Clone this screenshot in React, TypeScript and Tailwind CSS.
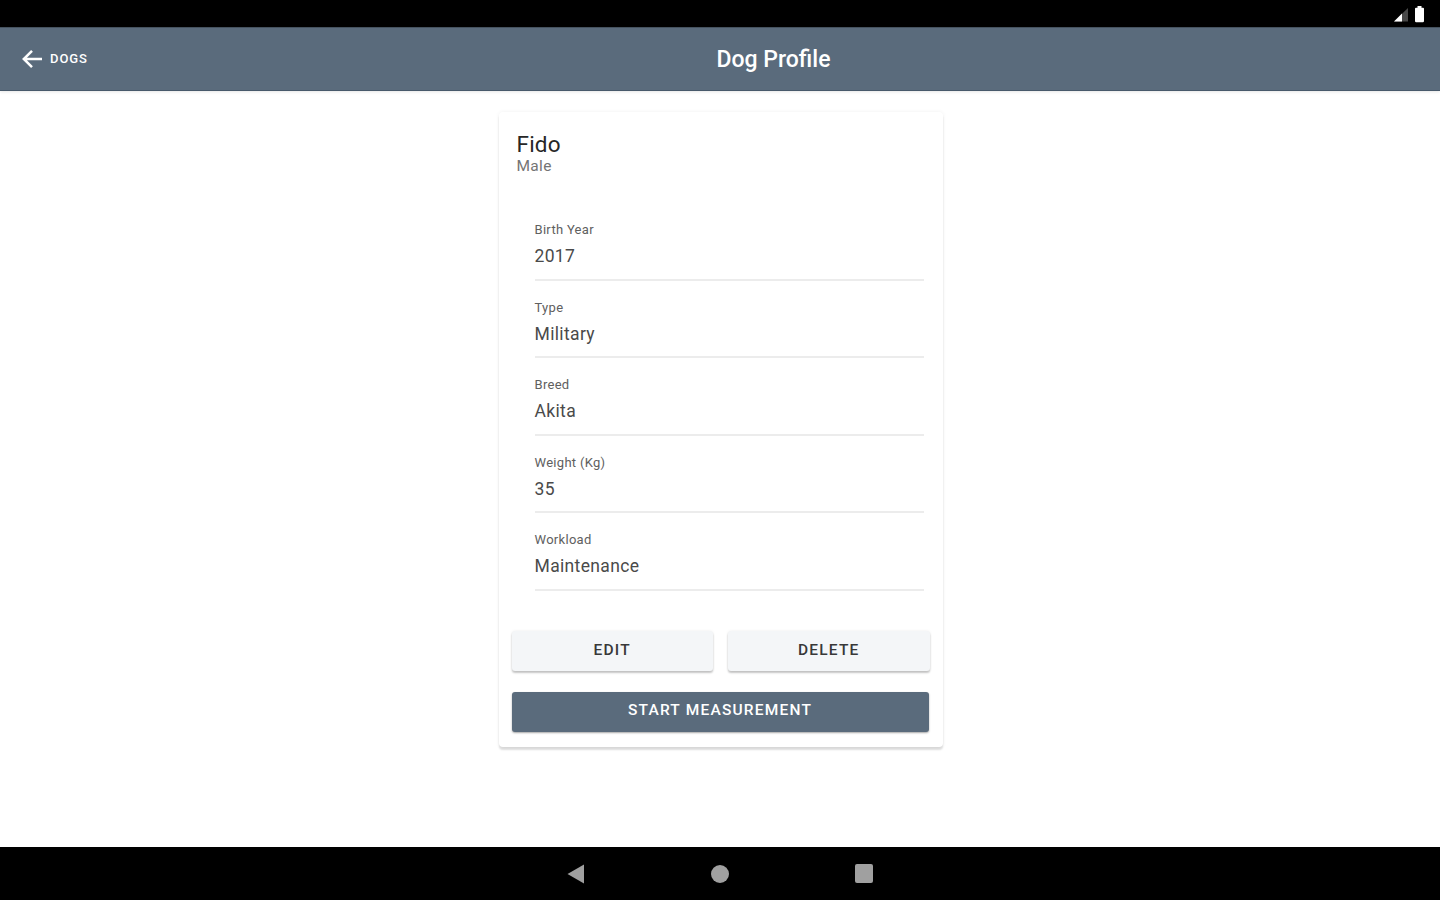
import React from 'react';

interface Field {
  label: string;
  value: string;
}

const fields: Field[] = [
  { label: 'Birth Year', value: '2017' },
  { label: 'Type', value: 'Military' },
  { label: 'Breed', value: 'Akita' },
  { label: 'Weight (Kg)', value: '35' },
  { label: 'Workload', value: 'Maintenance' },
];

const StatusBar: React.FC = () => (
  <div className="h-[27px] shrink-0 bg-black flex items-start justify-end gap-[7px] pt-[6px] pr-[16px]">
    <svg className="w-[14px] h-[17px]" viewBox="0 0 14 17">
      <path d="M0 15.5L14 2V15.5Z" fill="#484848" />
      <path d="M0 15.5L8 7.5V15.5Z" fill="#fff" />
    </svg>
    <svg className="w-[9px] h-[17px]" viewBox="0 0 9 17">
      <path d="M2.5 0h4v1.8H8q1 0 1 1V15q0 1.3-1.2 1.3H1.2Q0 16.3 0 15V2.8q0-1 1-1h1.5z" fill="#fff" />
    </svg>
  </div>
);

const Header: React.FC = () => (
  <header className="h-[64px] shrink-0 bg-[#5a6b7c] border-t border-b border-t-[#45525f] border-b-[#48596b] shadow-[0_1px_3px_rgba(0,0,0,0.1)] grid grid-cols-[107px_1fr] items-center text-white">
    <button className="flex items-center gap-[8px] pl-[22px] text-[13px] font-medium tracking-[0.9px]">
      <svg className="w-[20px] h-[20px]" viewBox="0 0 20 20" fill="none" stroke="currentColor" strokeWidth="2.5">
        <path d="M10 1.8L1.8 10L10 18.2M1.8 10H20" />
      </svg>
      DOGS
    </button>
    <h1 className="pt-[2px] text-center text-[23px] leading-[30px] font-medium">Dog Profile</h1>
  </header>
);

const ProfileCard: React.FC = () => (
  <div className="w-[444px] h-[635px] rounded-[4px] bg-white shadow-[0_3px_2px_rgba(0,0,0,0.13),0_0_4px_rgba(0,0,0,0.06)] flex flex-col">
    <div className="h-[91px] pt-[19px] pl-[18px]">
      <h2 className="text-[22.5px] leading-[26px] tracking-[0.2px] text-[#272727]">Fido</h2>
      <p className="text-[15.5px] leading-[19px] tracking-[0.3px] text-[#747474]">Male</p>
    </div>

    <dl className="pl-[36px] pr-[19px]">
      {fields.map((field) => (
        <div key={field.label} className="h-[77.5px] pt-[18px] border-b-2 border-[#ececec]">
          <dt className="text-[13px] leading-[18px] tracking-[0.3px] text-[#606060]">{field.label}</dt>
          <dd className="mt-[6px] text-[17.5px] leading-[22px] tracking-[0.35px] text-[#4a4a4a]">{field.value}</dd>
        </div>
      ))}
    </dl>

    <div className="mt-[40px] px-[13px] grid grid-cols-2 gap-[15px] text-[15.5px] font-medium tracking-[1.2px] text-[#383838]">
      <button className="h-[40px] rounded-[3px] bg-[#f4f6f8] shadow-[0_2px_2px_rgba(0,0,0,0.22),0_0_3px_rgba(0,0,0,0.08)]">EDIT</button>
      <button className="h-[40px] rounded-[3px] bg-[#f4f6f8] shadow-[0_2px_2px_rgba(0,0,0,0.22),0_0_3px_rgba(0,0,0,0.08)]">DELETE</button>
    </div>
    <button className="mt-[21px] ml-[13px] mr-[14px] h-[40px] pb-px rounded-[3px] bg-[#5a6b7c] shadow-[0_1px_2px_rgba(0,0,0,0.35)] text-[15.5px] font-medium tracking-[1.2px] text-white">
      START MEASUREMENT
    </button>
  </div>
);

const NavigationBar: React.FC = () => (
  <nav className="h-[53px] shrink-0 bg-black flex items-center justify-center gap-[126px] text-[#a0a0a0]">
    <svg className="w-[18px] h-[20px]" viewBox="0 0 18 20" fill="currentColor">
      <path d="M0.5 10L17 0.5V19.5Z" />
    </svg>
    <span className="w-[18px] h-[18px] rounded-full bg-[#a0a0a0]"></span>
    <span className="w-[18px] h-[19px] rounded-[2px] bg-[#a0a0a0]"></span>
  </nav>
);

const App: React.FC = () => {
  return (
    <div className="w-full h-screen flex flex-col overflow-hidden bg-white font-['Roboto',sans-serif]">
      <StatusBar />
      <Header />
      <main className="flex-1 flex justify-center items-start pt-[21px] pl-px">
        <ProfileCard />
      </main>
      <NavigationBar />
    </div>
  );
};

export default App;
